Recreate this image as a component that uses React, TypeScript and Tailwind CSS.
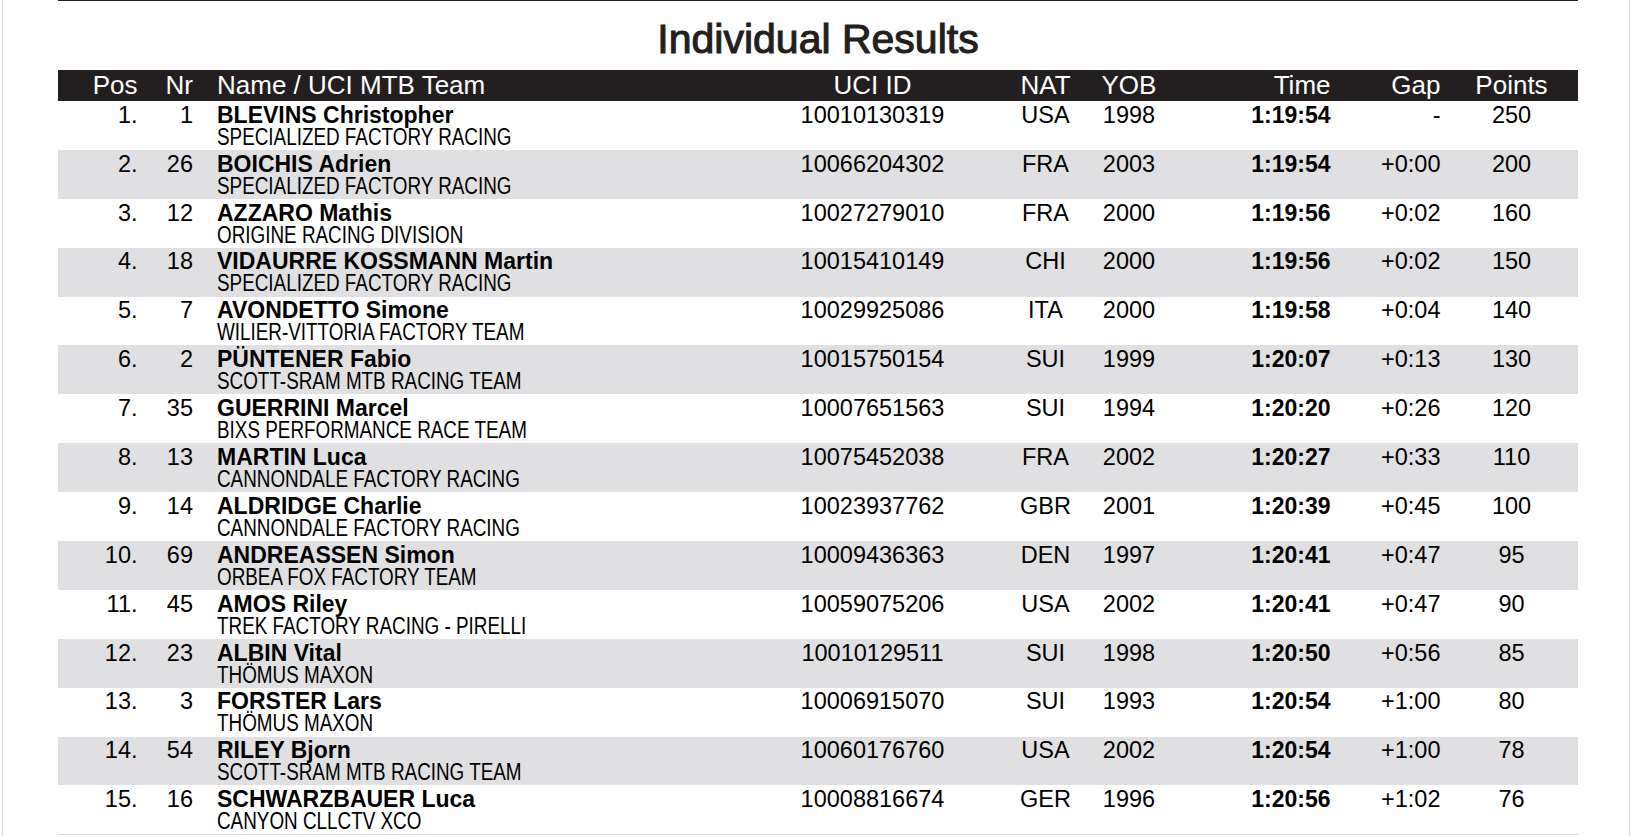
type Rider = {
  pos: number;
  nr: number;
  name: string;
  team: string;
  uci: string;
  nat: string;
  yob: number;
  time: string;
  gap: string;
  points: number;
};

const riders: Rider[] = [
  { pos: 1, nr: 1, name: 'BLEVINS Christopher', team: 'SPECIALIZED FACTORY RACING', uci: '10010130319', nat: 'USA', yob: 1998, time: '1:19:54', gap: '-', points: 250 },
  { pos: 2, nr: 26, name: 'BOICHIS Adrien', team: 'SPECIALIZED FACTORY RACING', uci: '10066204302', nat: 'FRA', yob: 2003, time: '1:19:54', gap: '+0:00', points: 200 },
  { pos: 3, nr: 12, name: 'AZZARO Mathis', team: 'ORIGINE RACING DIVISION', uci: '10027279010', nat: 'FRA', yob: 2000, time: '1:19:56', gap: '+0:02', points: 160 },
  { pos: 4, nr: 18, name: 'VIDAURRE KOSSMANN Martin', team: 'SPECIALIZED FACTORY RACING', uci: '10015410149', nat: 'CHI', yob: 2000, time: '1:19:56', gap: '+0:02', points: 150 },
  { pos: 5, nr: 7, name: 'AVONDETTO Simone', team: 'WILIER-VITTORIA FACTORY TEAM', uci: '10029925086', nat: 'ITA', yob: 2000, time: '1:19:58', gap: '+0:04', points: 140 },
  { pos: 6, nr: 2, name: 'PÜNTENER Fabio', team: 'SCOTT-SRAM MTB RACING TEAM', uci: '10015750154', nat: 'SUI', yob: 1999, time: '1:20:07', gap: '+0:13', points: 130 },
  { pos: 7, nr: 35, name: 'GUERRINI Marcel', team: 'BIXS PERFORMANCE RACE TEAM', uci: '10007651563', nat: 'SUI', yob: 1994, time: '1:20:20', gap: '+0:26', points: 120 },
  { pos: 8, nr: 13, name: 'MARTIN Luca', team: 'CANNONDALE FACTORY RACING', uci: '10075452038', nat: 'FRA', yob: 2002, time: '1:20:27', gap: '+0:33', points: 110 },
  { pos: 9, nr: 14, name: 'ALDRIDGE Charlie', team: 'CANNONDALE FACTORY RACING', uci: '10023937762', nat: 'GBR', yob: 2001, time: '1:20:39', gap: '+0:45', points: 100 },
  { pos: 10, nr: 69, name: 'ANDREASSEN Simon', team: 'ORBEA FOX FACTORY TEAM', uci: '10009436363', nat: 'DEN', yob: 1997, time: '1:20:41', gap: '+0:47', points: 95 },
  { pos: 11, nr: 45, name: 'AMOS Riley', team: 'TREK FACTORY RACING - PIRELLI', uci: '10059075206', nat: 'USA', yob: 2002, time: '1:20:41', gap: '+0:47', points: 90 },
  { pos: 12, nr: 23, name: 'ALBIN Vital', team: 'THÖMUS MAXON', uci: '10010129511', nat: 'SUI', yob: 1998, time: '1:20:50', gap: '+0:56', points: 85 },
  { pos: 13, nr: 3, name: 'FORSTER Lars', team: 'THÖMUS MAXON', uci: '10006915070', nat: 'SUI', yob: 1993, time: '1:20:54', gap: '+1:00', points: 80 },
  { pos: 14, nr: 54, name: 'RILEY Bjorn', team: 'SCOTT-SRAM MTB RACING TEAM', uci: '10060176760', nat: 'USA', yob: 2002, time: '1:20:54', gap: '+1:00', points: 78 },
  { pos: 15, nr: 16, name: 'SCHWARZBAUER Luca', team: 'CANYON CLLCTV XCO', uci: '10008816674', nat: 'GER', yob: 1996, time: '1:20:56', gap: '+1:02', points: 76 },
];

const sans = { fontFamily: '"Liberation Sans", Arial, sans-serif' };

export default function App() {
  return (
    <div className="h-[836px] overflow-hidden bg-white pl-[2px] pr-[4px]" style={sans}>
      <div className="h-full border-x border-[#d6d6d6]">
        <div className="ml-[55px] w-[1520px] border-t border-[#231f20]">
          {/* Titel */}
          <div className="h-[69px] pt-[14px] text-center text-[41px] leading-[48px] text-[#231f20] [-webkit-text-stroke:1.1px_#231f20]">
            Individual Results
          </div>

          {/* Kopfzeile */}
          <div className="flex h-[31px] bg-[#231f20] text-[26px] leading-[31px] text-white">
            <div className="w-[79.5px] text-right">Pos</div>
            <div className="w-[55.5px] text-right">Nr</div>
            <div className="w-[579.5px] pl-[24px]">Name / UCI MTB Team</div>
            <div className="w-[200px] text-center">UCI ID</div>
            <div className="ml-[17px] w-[112px] text-center">NAT</div>
            <div className="w-[55px] text-center">YOB</div>
            <div className="w-[174px] text-right">Time</div>
            <div className="w-[110px] text-right">Gap</div>
            <div className="ml-[5px] w-[132px] text-center">Points</div>
          </div>

          {/* Ergebnisse */}
          {riders.map((r, i) => (
            <div
              key={r.pos}
              className={`h-[48.9px] pt-[1.75px] text-black ${i % 2 === 1 ? 'bg-[#e0e0e2]' : 'bg-white'}`}
            >
              <div className="flex h-[24px] text-[23.5px] leading-[24px]">
                <div className="w-[79.5px] text-right">{r.pos}.</div>
                <div className="w-[55.5px] text-right">{r.nr}</div>
                <div className="w-[579.5px] pl-[24px] text-[23px] font-bold">{r.name}</div>
                <div className="w-[200px] text-center">{r.uci}</div>
                <div className="ml-[17px] w-[112px] text-center">{r.nat}</div>
                <div className="w-[55px] text-center">{r.yob}</div>
                <div className="w-[174px] text-right text-[23px] font-bold">{r.time}</div>
                <div className="w-[110px] text-right">{r.gap}</div>
                <div className="ml-[5px] w-[132px] text-center">{r.points}</div>
              </div>
              <div className="h-[20px] pl-[159px] text-[23px] leading-[20px]">
                <span className="inline-block origin-left scale-x-[0.82] whitespace-nowrap">{r.team}</span>
              </div>
            </div>
          ))}
          <div className="h-px bg-[#dcdcdc]" />
        </div>
      </div>
    </div>
  );
}
